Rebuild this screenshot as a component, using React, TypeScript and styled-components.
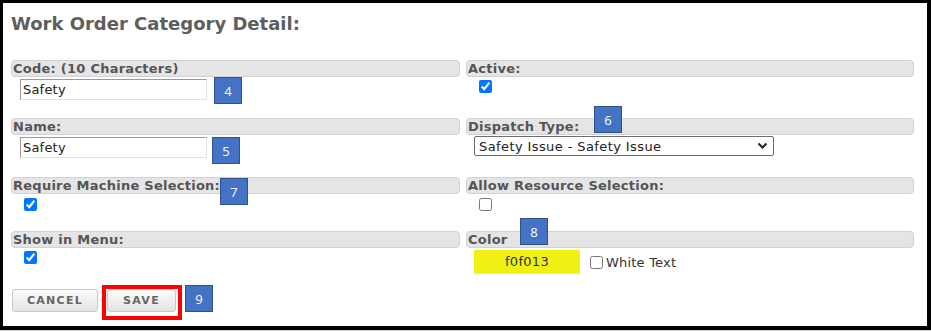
import React from "react";
import styled, { createGlobalStyle } from "styled-components";

const Global = createGlobalStyle`
  html, body { margin: 0; padding: 0; background: #fff; }
  body { font-family: "DejaVu Sans", Verdana, sans-serif; }
  * { box-sizing: border-box; }
`;

const Outer = styled.div`
  width: 931px;
  border-bottom: 1px solid #d6d6d6;
`;

const Frame = styled.div`
  width: 931px;
  height: 330px;
  border-style: solid;
  border-color: #000;
  border-width: 3px 4px 4px 3px;
  padding: 10px 14px 0 8px;
  background: #fff;
`;

const Title = styled.h1`
  margin: 0;
  height: 22px;
  line-height: 22px;
  font-size: 18px;
  font-weight: bold;
  color: #5e5e5e;
`;

const Grid = styled.div`
  margin-top: 25px;
  display: grid;
  grid-template-columns: 449px 448px;
  grid-template-rows: 58px 59px 54px 54px;
  column-gap: 6px;
`;

const Field = styled.div`
  position: relative;
`;

const Header = styled.div`
  height: 17px;
  border: 1px solid #d2d2d2;
  border-radius: 4px;
  background: #e5e5e5;
  padding-left: 1px;
  font-size: 13px;
  line-height: 15px;
  font-weight: bold;
  letter-spacing: 0.25px;
  color: #555;
  white-space: nowrap;
`;

const Content = styled.div<{ $pl: number; $pt: number }>`
  display: flex;
  align-items: center;
  padding-left: ${(p) => p.$pl}px;
  padding-top: ${(p) => p.$pt}px;
`;

const TextInput = styled.input`
  width: 187px;
  height: 21px;
  border-style: solid;
  border-width: 1px;
  border-color: #9a9a9a #e2e2e2 #e2e2e2 #9a9a9a;
  padding: 0 0 0 2px;
  font-family: "DejaVu Sans", Verdana, sans-serif;
  font-size: 13px;
  letter-spacing: 0.2px;
  color: #222;
  background: #fff;
  outline: none;
`;

const Check = styled.input.attrs({ type: "checkbox" })`
  margin: 0;
  width: 13px;
  height: 13px;
  accent-color: #0075ff;
`;

const SelectWrap = styled.div`
  position: relative;
  width: 300px;
  height: 20px;
  border: 1px solid #6e6e6e;
  border-radius: 2px;
  display: flex;
  align-items: center;
  padding-left: 4px;
  font-size: 13px;
  letter-spacing: 0.4px;
  color: #222;
  background: #fff;
`;

const Chevron = styled.svg`
  position: absolute;
  right: 5px;
  top: 5px;
`;

const ColorBox = styled.div`
  width: 106px;
  height: 24px;
  background: #f0f013;
  border-bottom: 1px solid #e0e0e0;
  display: flex;
  align-items: center;
  justify-content: center;
  font-size: 13px;
  letter-spacing: 0.3px;
  color: #333;
`;

const InlineLabel = styled.label`
  display: flex;
  align-items: center;
  gap: 3px;
  margin-left: 10px;
  font-size: 13px;
  letter-spacing: 0.2px;
  color: #333;
`;

const Badge = styled.div<{ $x: number; $y: number }>`
  position: absolute;
  left: ${(p) => p.$x}px;
  top: ${(p) => p.$y}px;
  width: 28px;
  height: 27px;
  background: #4472c4;
  border: 1px solid #2f528f;
  color: #fff;
  font-family: "Open Sans", "Liberation Sans", sans-serif;
  font-size: 13px;
  display: flex;
  align-items: center;
  justify-content: center;
  z-index: 2;
`;

const InlineBadge = styled(Badge)`
  position: static;
  margin-left: 3px;
  align-self: flex-start;
`;

const Actions = styled.div`
  display: flex;
  align-items: flex-start;
  margin-left: 1px;
`;

const Button = styled.button`
  height: 23px;
  border: 1px solid #c9c9c9;
  border-radius: 3px;
  background: linear-gradient(#fbfbfb, #e4e4e4);
  font-family: "DejaVu Sans", Verdana, sans-serif;
  font-size: 11px;
  font-weight: bold;
  letter-spacing: 1.3px;
  color: #666;
  padding: 0;
  display: flex;
  align-items: center;
  justify-content: center;
`;

const CancelButton = styled(Button)`
  width: 86px;
  margin-top: 4px;
`;

const SaveButton = styled(Button)`
  width: 69px;
`;

const Highlight = styled.div`
  margin-left: 4px;
  border: 4px solid #ff0000;
  padding: 0 2px 4px 1px;
`;

export default function App() {
  return (
    <>
      <Global />
      <Outer>
        <Frame>
          <Title>Work Order Category Detail:</Title>
          <Grid>
            <Field>
              <Header>Code: (10 Characters)</Header>
              <Content $pl={9} $pt={2}>
                <TextInput defaultValue="Safety" />
              </Content>
              <Badge $x={203} $y={17}>4</Badge>
            </Field>
            <Field>
              <Header>Active:</Header>
              <Content $pl={13} $pt={3}>
                <Check defaultChecked />
              </Content>
            </Field>
            <Field>
              <Header>Name:</Header>
              <Content $pl={9} $pt={2}>
                <TextInput defaultValue="Safety" />
              </Content>
              <Badge $x={201} $y={19}>5</Badge>
            </Field>
            <Field>
              <Header>Dispatch Type:</Header>
              <Content $pl={8} $pt={1}>
                <SelectWrap>
                  Safety Issue - Safety Issue
                  <Chevron width="11" height="8" viewBox="0 0 11 8">
                    <path d="M1.5 1.5 L5.5 5.5 L9.5 1.5" fill="none" stroke="#222" strokeWidth="2" />
                  </Chevron>
                </SelectWrap>
              </Content>
              <Badge $x={128} $y={-12}>6</Badge>
            </Field>
            <Field>
              <Header>Require Machine Selection:</Header>
              <Content $pl={13} $pt={4}>
                <Check defaultChecked />
              </Content>
              <Badge $x={209} $y={1}>7</Badge>
            </Field>
            <Field>
              <Header>Allow Resource Selection:</Header>
              <Content $pl={13} $pt={4}>
                <Check />
              </Content>
            </Field>
            <Field>
              <Header>Show in Menu:</Header>
              <Content $pl={13} $pt={3}>
                <Check defaultChecked />
              </Content>
            </Field>
            <Field>
              <Header>Color</Header>
              <Content $pl={8} $pt={2}>
                <ColorBox>f0f013</ColorBox>
                <InlineLabel>
                  <Check />
                  White Text
                </InlineLabel>
              </Content>
              <Badge $x={54} $y={-13}>8</Badge>
            </Field>
          </Grid>
          <Actions>
            <CancelButton>CANCEL</CancelButton>
            <Highlight>
              <SaveButton>SAVE</SaveButton>
            </Highlight>
            <InlineBadge $x={0} $y={0}>9</InlineBadge>
          </Actions>
        </Frame>
      </Outer>
    </>
  );
}
